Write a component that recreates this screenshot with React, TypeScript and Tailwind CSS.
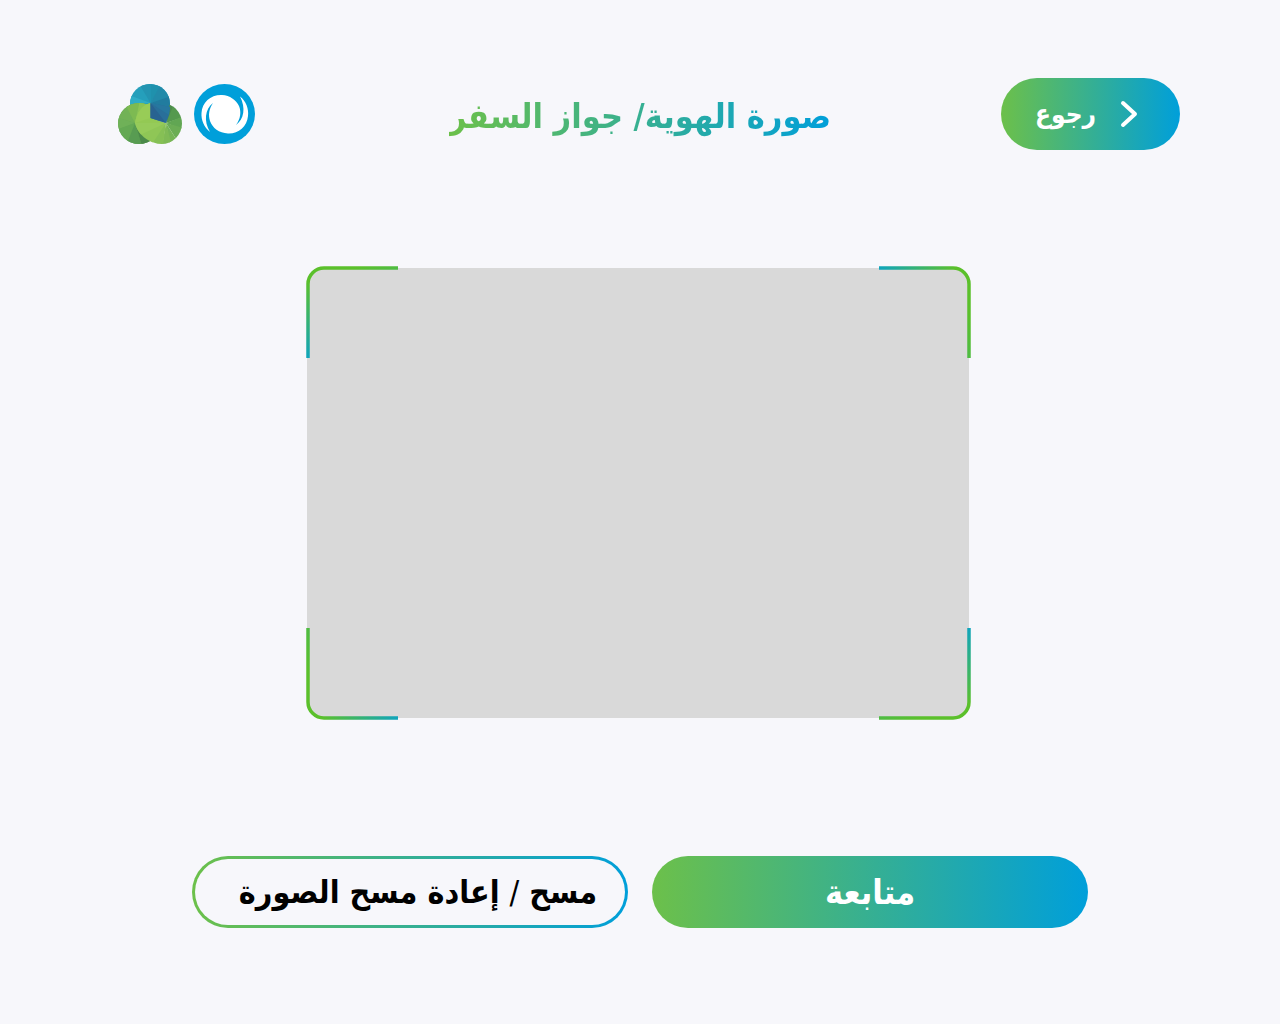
const gradient = "bg-linear-to-r/srgb from-[#6cc04a] to-[#009fda]";

function TrefoilLogo() {
  return (
    <svg viewBox="0 0 64 60" className="h-15 w-16" role="img" aria-label="شعار الوزارة">
      <defs>
        <clipPath id="lobe-top"><circle cx="32" cy="20" r="20" /></clipPath>
        <clipPath id="lobe-left"><ellipse cx="21" cy="39.5" rx="21" ry="20.5" /></clipPath>
        <clipPath id="lobe-right"><ellipse cx="43.5" cy="39.5" rx="20.5" ry="20.5" /></clipPath>
      </defs>
      <g clipPath="url(#lobe-top)">
        <path d="M0 0H64V44H0Z" fill="#259fbb" />
        <path d="M32.500 19L20 -2H32.500Z" fill="#2394b1" />
        <path d="M32.500 19V-2H46Z" fill="#1f91ad" />
        <path d="M32.500 19L44 -2L60 13Z" fill="#228aa9" />
        <path d="M32.500 19L60 10V26Z" fill="#217c9f" />
        <path d="M32.500 19L8 10V20L12 26Z" fill="#2fadc6" />
        <path d="M32.500 19L8 22V32Z" fill="#2398b8" />
      </g>
      <g clipPath="url(#lobe-left)">
        <path d="M0 10H50V60H0Z" fill="#67a957" />
        <path d="M17 39L0 34V10H40V34Z" fill="#72b256" />
        <path d="M17 39L6 18H40V39Z" fill="#7dba52" />
        <path d="M17 39L22 16H40V39Z" fill="#8cc456" />
        <path d="M17 39L-2 33V46Z" fill="#6fb158" />
        <path d="M17 39L-2 46L8 62Z" fill="#64a953" />
        <path d="M17 39L8 62H24Z" fill="#589c52" />
        <path d="M17 39L24 62H40Z" fill="#4b894a" />
      </g>
      <g clipPath="url(#lobe-right)">
        <path d="M48 39L52 18L58 24Z" fill="#4c8c4a" />
        <path d="M48 39L56 20L66 33Z" fill="#55994e" />
        <path d="M48 39L66 32V46Z" fill="#61a653" />
        <path d="M48 39L66 44L60 58Z" fill="#6bad55" />
        <path d="M48 39L60 58L52 62Z" fill="#75b456" />
        <path d="M48 39L54 62H44Z" fill="#7fba55" />
        <path d="M48 39L45 62H32V54Z" fill="#86c055" />
      </g>
      <path d="M48 39L35 58.500C26 55 19 48 17 39Z" fill="#8fc656" />
      <path d="M48 39L23 50.500C20 47 18 43 17 39Z" fill="#96cb5a" />
      <path d="M48 39H17C19 28 24 21 32.500 19V34Z" fill="#93c954" />
      <path d="M17 39C19 28 24 21 32.500 19V34Z" fill="#98cc57" />
      <path d="M32.500 19L52 23L51 31L48 39L32.500 34Z" fill="#296f9a" />
      <path d="M32.500 19L52 23L51 31Z" fill="#27779f" />
      <path d="M32.500 19L48 39L32.500 34Z" fill="#286391" />
    </svg>
  );
}

function SwirlLogo() {
  return (
    <svg viewBox="0 0 61 60" className="h-15 w-[61px]" role="img" aria-label="شعار المنصة">
      <ellipse cx="30.500" cy="30" rx="30.500" ry="30" fill="#009fda" />
      <path
        d="M16 48C10 43 7 36 7.500 29C8 18 17 10.500 28 11C36 11.500 42 16 45 22C47.500 28 46.500 35 42 41C50 35 52 24 46 12.500C52 17 55 25 54 32C53 43 44 50 34 49.500C25 49 18.500 44 16 37C14 31 15 25 19 19C11 25 9.500 37 16 48Z"
        fill="#fff"
      />
    </svg>
  );
}

const corners = [
  { id: "top-left", place: "-top-0.5 -left-px" },
  { id: "top-right", place: "-top-0.5 -right-0.5 rotate-90" },
  { id: "bottom-right", place: "-right-0.5 -bottom-0.5 rotate-180" },
  { id: "bottom-left", place: "-bottom-0.5 -left-px -rotate-90" },
];

function ScanFrame() {
  return (
    <div className="relative aspect-[662/450] w-full max-w-[662px] rounded-2xl bg-[#d9d9d9]">
      {corners.map((c) => (
        <svg key={c.id} viewBox="0 0 92 92" className={`absolute size-[92px] ${c.place}`} fill="none" aria-hidden="true">
          <defs>
            <linearGradient id={`corner-${c.id}`} gradientUnits="userSpaceOnUse" x1="29" y1="100" x2="0" y2="0">
              <stop offset="0" stopColor="#009fda" />
              <stop offset="0.850" stopColor="#5bc02b" />
            </linearGradient>
          </defs>
          <path d="M2 92V18A16 16 0 0 1 18 2H92" stroke={`url(#corner-${c.id})`} strokeWidth="3.500" />
        </svg>
      ))}
    </div>
  );
}

export default function App() {
  return (
    <div
      dir="rtl"
      className="flex min-h-screen flex-col items-center bg-[#f7f7fb] pt-[78px] pb-24 font-['DejaVu_Sans_Condensed','DejaVu_Sans',sans-serif] font-bold"
    >
      <header className="grid w-full grid-cols-[1fr_auto_1fr] items-center px-[100px]">
        <button
          type="button"
          className={`flex h-18 w-[179px] items-center justify-center gap-6 rounded-full pr-2 text-[26px] text-white ${gradient}`}
        >
          <svg viewBox="0 0 18 28" className="h-7 w-[18px]" fill="none" stroke="currentColor" strokeWidth="4" strokeLinecap="round" strokeLinejoin="round" aria-hidden="true">
            <path d="M3 3L15 14L3 25" />
          </svg>
          <span>رجوع</span>
        </button>
        <h1 className={`bg-clip-text pt-1 text-[34px] leading-[60px] whitespace-nowrap text-transparent ${gradient}`}>
          صورة الهوية/ جواز السفر
        </h1>
        <div dir="ltr" className="flex items-center gap-3 pl-[18px]">
          <TrefoilLogo />
          <SwirlLogo />
        </div>
      </header>

      <main className="flex w-full flex-1 flex-col items-center justify-between px-6 pt-[118px]">
        <div className="flex w-full justify-center pr-1">
          <ScanFrame />
        </div>
        <div className="grid w-full max-w-[896px] grid-cols-2 gap-6">
          <button type="button" className={`h-18 rounded-full text-[34px] whitespace-nowrap text-white ${gradient}`}>
            متابعة
          </button>
          <div className={`flex h-18 rounded-full p-[3px] ${gradient}`}>
            <button type="button" className="flex-1 rounded-full bg-[#f7f7fb] pl-4 text-[32px] whitespace-nowrap text-black">
              مسح <span className="font-normal">/</span> إعادة مسح الصورة
            </button>
          </div>
        </div>
      </main>
    </div>
  );
}
